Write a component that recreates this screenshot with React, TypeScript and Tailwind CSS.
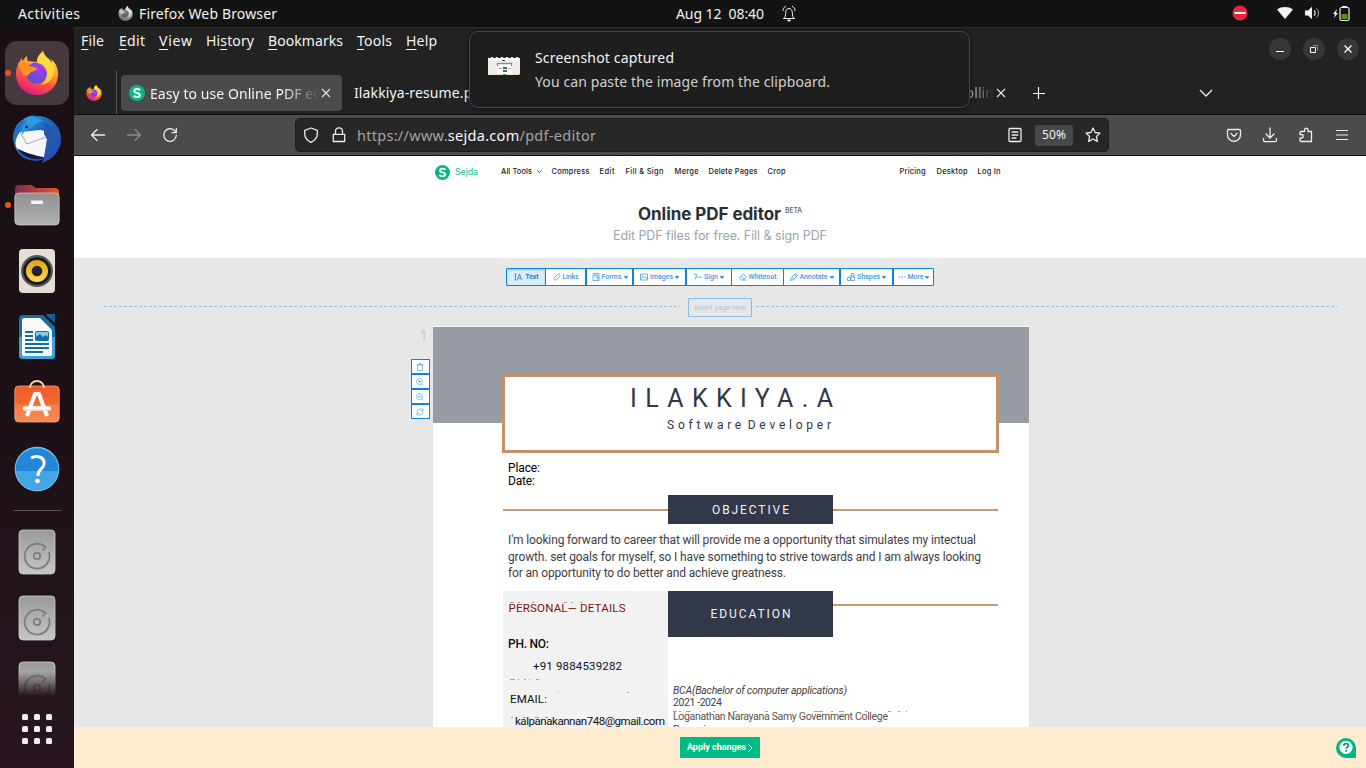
import { useLayoutEffect, useRef } from "react";
import type { ReactNode } from "react";

/** Single line of text whose letter spacing is computed so that it spans `w` pixels. */
function Fit({ w, className = "", children }: { w: number; className?: string; children: ReactNode }) {
  const ref = useRef<HTMLSpanElement>(null);
  useLayoutEffect(() => {
    const el = ref.current;
    if (!el) return;
    el.style.letterSpacing = "0px";
    const natural = el.getBoundingClientRect().width;
    const n = (el.textContent ?? "").length;
    if (n > 1) {
      const gap = (w - natural) / (n - 1);
      el.style.letterSpacing = `${gap}px`;
      el.style.marginRight = `${-gap}px`;
    }
  }, [w, children]);
  return (
    <span ref={ref} className={`inline-block shrink-0 whitespace-pre ${className}`}>
      {children}
    </span>
  );
}

function FirefoxIcon({ size, gray = false }: { size: number; gray?: boolean }) {
  const id = gray ? "g" : "c" + size;
  return (
    <svg width={size} height={size} viewBox="0 0 44 44" className="shrink-0">
      <defs>
        <linearGradient id={`fa${id}`} x1="0.8" y1="0" x2="0.35" y2="1">
          <stop offset="0" stopColor={gray ? "#f2f2f2" : "#fff44f"} />
          <stop offset="0.35" stopColor={gray ? "#bdbdbd" : "#ffb02e"} />
          <stop offset="0.65" stopColor={gray ? "#8d8d8d" : "#ff5a36"} />
          <stop offset="1" stopColor={gray ? "#6d6d6d" : "#e31587"} />
        </linearGradient>
        <radialGradient id={`fb${id}`} cx="0.65" cy="0.3" r="0.8">
          <stop offset="0" stopColor={gray ? "#7a7a7a" : "#a63cf0"} />
          <stop offset="1" stopColor={gray ? "#555" : "#5050d0"} />
        </radialGradient>
      </defs>
      <path d="M28 0c-3 3-6 6-6 11l-9-1c-1-2-1-3-1-5-2 1-3 3-4 5-1-1-1-2-1-3-3 4-6 9-6 16 0 12 9 21 21 21s21-9 21-21c0-7-3-12-7-15 1 2 1 3 1 4-2-5-8-6-9-12z" fill={`url(#fa${id})`} />
      <circle cx="21.500" cy="22" r="10.500" fill={`url(#fb${id})`} />
      <path d="M3 12c5-3 8 0 11 3 4 1 8 1 8 3-3 3-6 2-8 5-1 3-5 2-6 0-2-3-4-7-5-11z" fill={gray ? "#c4c4c4" : "#ff9125"} />
      <path d="M28 0c-3 3-7 7-6 12 5 1 10 5 10 11 0 5-3 9-7 11 9-1 14-7 14-14 0-6-3-8-6-11-2-3-4-5-5-9z" fill={gray ? "#dcdcdc" : "#ffdc3c"} opacity="0.85" />
    </svg>
  );
}

function Thunderbird() {
  return (
    <svg width="50" height="50" viewBox="0 0 50 50">
      <defs>
        <linearGradient id="tb" x1="0" y1="0" x2="1" y2="1">
          <stop offset="0" stopColor="#2b9be6" />
          <stop offset="0.5" stopColor="#1f62b8" />
          <stop offset="1" stopColor="#3444a8" />
        </linearGradient>
      </defs>
      <path d="M14 4c3-3 7-3 10-2 13-1 25 9 25 23 0 12-8 20-19 24l2-4c-10 4-22 1-27-8C-1 27 0 13 10 6z" fill="url(#tb)" />
      <path d="M5 31C-1 20 4 9 13 6c-5 7-6 9-5 14z" fill="#1d6fc4" />
      <path d="M8 18l20-2c6 0 7 4 7 9l-3 18c-8-1-20-4-27-8-3-6-1-12 3-17z" fill="#f7f7f9" />
      <path d="M8 18l7 12 19-7" fill="none" stroke="#a7a9b3" strokeWidth="1" />
      <path d="M11 5c8-5 17-1 20 2-5 1-10 6-13 7-3 2-5 2-8 7 0-6 1-10 5-14z" fill="#2f97dc" />
      <path d="M32 8c9 4 12 13 8 21l6-3-4 6 5-1-6 7 3 0-9 7c3-10 2-18-3-25z" fill="#2558ad" />
      <circle cx="14.500" cy="13" r="1.300" fill="#16233c" />
      <path d="M5 34c5 4 18 7 27 10-8 3-20 1-27-10z" fill="#1c1540" />
    </svg>
  );
}

function Folder() {
  return (
    <svg width="46" height="42" viewBox="0 0 46 42">
      <defs>
        <linearGradient id="fo1"><stop offset="0" stopColor="#7c2b50" /><stop offset="0.5" stopColor="#b8403c" /><stop offset="1" stopColor="#e95420" /></linearGradient>
        <linearGradient id="fo2" x2="0" y2="1"><stop offset="0" stopColor="#909090" /><stop offset="1" stopColor="#b2b2b2" /></linearGradient>
      </defs>
      <path d="M1 5a4 4 0 0 1 4-4h12c2 0 3 3 5 3h19a4 4 0 0 1 4 4v16H1z" fill="url(#fo1)" />
      <rect x="0.800" y="9" width="44.400" height="32" rx="4" fill="url(#fo2)" stroke="#d0d0d0" strokeWidth="0.700" />
      <rect x="17" y="16.500" width="12" height="3.500" rx="1" fill="#f4f4f4" />
    </svg>
  );
}

function Rhythmbox() {
  return (
    <svg width="38" height="46" viewBox="0 0 38 46">
      <defs><linearGradient id="rb" x2="0" y2="1"><stop offset="0" stopColor="#e0a411" /><stop offset="1" stopColor="#ffd94c" /></linearGradient></defs>
      <rect x="1" y="1" width="36" height="44" rx="4" fill="#e3ded2" />
      <circle cx="19" cy="23" r="16" fill="#55555c" />
      <circle cx="19" cy="23" r="13.800" fill="#191920" />
      <circle cx="19" cy="23" r="11" fill="url(#rb)" />
      <circle cx="19" cy="23" r="5.300" fill="#222226" />
    </svg>
  );
}

function Writer() {
  return (
    <svg width="38" height="46" viewBox="0 0 38 46">
      <rect x="1" y="1" width="36" height="44" rx="4" fill="#1272a8" />
      <path d="M1 23h36v18a4 4 0 0 1-4 4H5a4 4 0 0 1-4-4z" fill="#43a0d4" />
      <path d="M25 1l12 12V9L28 1z" fill="#1a1016" />
      <path d="M28 0h9v9z" fill="#0f5f90" />
      <path d="M6 4h16l12 12v24a2 2 0 0 1-2 2H6a2 2 0 0 1-2-2V6a2 2 0 0 1 2-2z" fill="#fafafa" />
      <path d="M7 18h8M7 22h8M7 26h8M7 30h24M7 34h24M7 38h18" stroke="#0f6fae" strokeWidth="2" />
      <rect x="17.500" y="17.500" width="13" height="9" rx="1" fill="#8cc8ee" stroke="#0f6fae" />
      <path d="M18 26v-3l4-3 3 3 3-2 2 2v3z" fill="#0f6fae" />
    </svg>
  );
}

function Software() {
  return (
    <svg width="46" height="44" viewBox="0 0 46 44">
      <defs><linearGradient id="sw" x2="0" y2="1"><stop offset="0" stopColor="#f1592a" /><stop offset="0.5" stopColor="#f2692f" /><stop offset="0.52" stopColor="#f47c46" /><stop offset="1" stopColor="#f58a55" /></linearGradient></defs>
      <rect x="0.800" y="7" width="44.400" height="36" rx="4" fill="url(#sw)" stroke="#f9a27d" strokeWidth="0.800" />
      <path d="M16 9c0-4 3-7 7-7s7 3 7 7" fill="none" stroke="#f3d7a8" strokeWidth="1.800" />
      <path d="M13 37l8-22h4l8 22" fill="none" stroke="#fff" strokeWidth="4" strokeLinejoin="round" />
      <path d="M11 29.500h24" stroke="#fff" strokeWidth="4.500" strokeLinecap="round" />
      <path d="M10 31h26" stroke="#f9b99c" strokeWidth="0.800" />
    </svg>
  );
}

function HelpApp() {
  return (
    <svg width="46" height="46" viewBox="0 0 46 46">
      <circle cx="23" cy="23" r="22.200" fill="#42a5e6" />
      <path d="M.8 25a22.200 22.200 0 1 1 44.400 0z" fill="#2386d6" />
      <circle cx="23" cy="23" r="21.800" fill="none" stroke="#8ccaf2" strokeWidth="0.800" />
      <path d="M17 12c6-3 14-1 13 6 0 5-6 5-6 11v1" fill="none" stroke="#fff" strokeWidth="3" />
      <circle cx="23.500" cy="35" r="2.300" fill="#fff" />
    </svg>
  );
}

function Disk() {
  return (
    <svg width="38" height="46" viewBox="0 0 38 46" className="shrink-0">
      <defs><linearGradient id="dk" x2="0" y2="1"><stop offset="0" stopColor="#9a9a9a" /><stop offset="1" stopColor="#c6c6c6" /></linearGradient></defs>
      <rect x="1" y="1" width="36" height="44" rx="4" fill="url(#dk)" stroke="#cfcfcf" strokeWidth="0.800" />
      <path d="M30.800 23A12.400 12.400 0 1 1 27.500 18L24.500 21.500" fill="none" stroke="#7d7d7d" strokeWidth="1.800" />
      <circle cx="19" cy="27" r="3.200" fill="none" stroke="#7d7d7d" strokeWidth="1.800" />
    </svg>
  );
}

function SejdaLogo({ size }: { size: number }) {
  return (
    <svg width={size} height={size} viewBox="0 0 16 16" className="shrink-0">
      <circle cx="8" cy="8" r="8" fill="#05b886" />
      <path d="M11.200 5.200C9.800 3.300 5.300 3.500 5.300 5.900c0 2.600 5.600 1.500 5.600 4.200 0 2.500-4.700 2.600-6.300.5" fill="none" stroke="#fff" strokeWidth="2" />
    </svg>
  );
}

function CloseX() {
  return (
    <svg width="10" height="10" viewBox="0 0 10 10" className="shrink-0" stroke="#e6e6e6" strokeWidth="1.100">
      <path d="M1 1l8 8M9 1L1 9" />
    </svg>
  );
}

function TopBar() {
  return (
    <header className="flex h-[27px] shrink-0 items-center bg-[#131313] pb-[1px] text-[14px] text-[#f2f2f2]">
      <div className="flex w-[676px] items-center pl-[18px]">
        <Fit w={62}>Activities</Fit>
        <div className="ml-[38px] mr-[6px] flex"><FirefoxIcon size={15} gray /></div>
        <Fit w={138}>Firefox Web Browser</Fit>
      </div>
      <Fit w={88}>Aug 12  08:40</Fit>
      <svg width="14" height="17" viewBox="0 0 14 17" className="ml-[18px]" fill="none" stroke="#eee">
        <path d="M1 13.500h12M2.500 13c1.200-2 1-4 1.300-6C4.200 4.500 5.300 3.500 7 3.500s2.800 1 3.200 3.500c.3 2 .1 4 1.300 6M1 6c0-2 1-4 3-5M13 6c0-2-1-4-3-5" />
        <path d="M5.500 15h3l-1.500 1.500z" fill="#eee" />
      </svg>
      <div className="ml-auto flex items-center pr-[16px]">
        <svg width="16" height="16" viewBox="0 0 16 16"><circle cx="8" cy="8" r="7.500" fill="#e6283c" /><path d="M2.500 8h11" stroke="#fff" strokeWidth="2" /></svg>
        <svg width="16" height="14" viewBox="0 0 16 14" className="ml-[29px]"><path d="M0 3.500C4 .2 12 .2 16 3.500L8 13z" fill="#f2f2f2" /></svg>
        <svg width="16" height="14" viewBox="0 0 16 14" className="ml-[12px]" fill="none" stroke="#bbb">
          <path d="M0 4.500h3L7 .8v12.400L3 9.500H0z" fill="#f2f2f2" stroke="none" />
          <path d="M9 4.500c1.300 1.300 1.300 3.700 0 5" stroke="#f2f2f2" strokeWidth="1.300" /><path d="M11.500 2.500c2.600 2.300 2.600 6.700 0 9" />
        </svg>
        <svg width="17" height="17" viewBox="0 0 17 17" className="ml-[12px]">
          <path d="M4 4L0 9h2l-1 4 4-5H3z" fill="#f2f2f2" />
          <rect x="7" y="2.500" width="9" height="13" rx="1.500" fill="none" stroke="#e8e8e8" strokeWidth="1.200" /><path d="M9 1.500h5" stroke="#e8e8e8" />
          <rect x="8.500" y="9" width="6" height="5" fill="#4e9a06" />
        </svg>
      </div>
    </header>
  );
}

function DockItem({ h, dot = false, children }: { h: string; dot?: boolean; children: ReactNode }) {
  return (
    <div className={`relative flex w-full shrink-0 items-center justify-center ${h}`}>
      {children}
      {dot && <span className="absolute left-[5px] top-1/2 h-[6px] w-[6px] -translate-y-1/2 rounded-full bg-[#e95420]" />}
    </div>
  );
}

function Dock() {
  return (
    <nav className="flex w-[74px] shrink-0 flex-col items-center bg-linear-to-b from-[#190f15] via-[#1b1117] to-[#29151f] pt-[14px]">
      <DockItem h="h-[64px]" dot>
        <div className="flex h-[64px] w-[64px] items-center justify-center rounded-[12px] bg-[#45393f]">
          <FirefoxIcon size={44} />
        </div>
      </DockItem>
      <DockItem h="h-[67px]"><Thunderbird /></DockItem>
      <DockItem h="h-[66px]" dot><Folder /></DockItem>
      <DockItem h="h-[66px]"><Rhythmbox /></DockItem>
      <DockItem h="h-[66px]"><Writer /></DockItem>
      <DockItem h="h-[62px]"><Software /></DockItem>
      <DockItem h="h-[74px]"><HelpApp /></DockItem>
      <div className="mt-[4px] h-px w-[48px] shrink-0 bg-[#5b5156]" />
      <DockItem h="h-[82px]"><Disk /></DockItem>
      <DockItem h="h-[50px]"><Disk /></DockItem>
      <div className="relative mt-[18px] h-[35px] w-[38px] shrink-0 overflow-hidden">
        <Disk />
        <div className="absolute inset-0 bg-linear-to-b from-transparent from-30% to-[#24131c]" />
      </div>
      <div className="mt-[18px] grid grid-cols-3 gap-[6px]">
        {[0, 1, 2, 3, 4, 5, 6, 7, 8].map((i) => (
          <span key={i} className="h-[6px] w-[6px] rounded-[1.500px] bg-[#f2f0ee]" />
        ))}
      </div>
    </nav>
  );
}

const menus: [string, string, string, number, string][] = [
  ["", "F", "ile", 23, "mr-[15px]"],
  ["", "E", "dit", 26, "mr-[14px]"],
  ["", "V", "iew", 33, "mr-[14px]"],
  ["Hi", "s", "tory", 48, "mr-[14px]"],
  ["", "B", "ookmarks", 75, "mr-[14px]"],
  ["", "T", "ools", 35, "mr-[14px]"],
  ["", "H", "elp", 31, ""],
];

function MenuBar() {
  return (
    <div className="flex h-[44px] items-start justify-between border-t border-[#303030]">
      <div className="flex pl-[7px] pt-[3px] text-[14px] leading-[20px] text-[#f4f4f4]">
        {menus.map(([a, b, c, w, gap]) => (
          <div key={b + c} className={gap}>
            <Fit w={w}>{a}<span className="underline decoration-1 underline-offset-[3px]">{b}</span>{c}</Fit>
          </div>
        ))}
      </div>
      <div className="flex gap-[12px] pr-[7px] pt-[10px]">
        <WinButton><path d="M7 13.500h8" /></WinButton>
        <WinButton><path d="M7.500 9.500h5v5h-5z" /><path d="M10 7.500h4.500v5" stroke="#888" /></WinButton>
        <WinButton><path d="M7.500 7.500l7 7M14.500 7.500l-7 7" strokeWidth="1.300" /></WinButton>
      </div>
    </div>
  );
}

function WinButton({ children }: { children: ReactNode }) {
  return (
    <svg width="22" height="22" viewBox="0 0 22 22" fill="none" stroke="#fff">
      <circle cx="11" cy="11" r="11" fill="#373737" stroke="none" />
      {children}
    </svg>
  );
}

function TabStrip() {
  return (
    <div className="flex h-[44px] shrink-0 items-stretch border-b border-[#0f0f0f] text-[14px] text-[#f4f4f4]">
      <div className="flex w-[43px] items-center justify-center border-r border-[#5a5a5a] pl-[0px]">
        <div className="-ml-[2px]"><FirefoxIcon size={16} /></div>
      </div>
      <div className="ml-[4px] mt-[4px] flex h-[36px] w-[221px] items-center rounded-[4px] bg-[#4b4b4b] pl-[8px]">
        <SejdaLogo size={16} />
        <div className="ml-[5px] w-[170px] overflow-hidden whitespace-nowrap [mask-image:linear-gradient(to_right,#000_78%,transparent)]">
          <Fit w={195}>Easy to use Online PDF editor</Fit>
        </div>
        <div className="ml-[1px]"><CloseX /></div>
      </div>
      <div className="ml-[12px] flex w-[642px] items-center">
        <Fit w={132}>Ilakkiya-resume.pdf</Fit>
        <div className="ml-auto mr-[2px] w-[34px] overflow-hidden text-right [mask-image:linear-gradient(to_right,#000_10%,transparent)]">
          <Fit w={34}>rollin</Fit>
        </div>
      </div>
      <div className="flex items-center">
        <CloseX />
        <svg width="12" height="12" viewBox="0 0 12 12" className="ml-[27px]" stroke="#fff"><path d="M5.500 0v12M0 6.500h12" strokeWidth="1.200" /></svg>
        <svg width="14" height="8" viewBox="0 0 14 8" className="ml-[154px]" fill="none" stroke="#eee" strokeWidth="1.300"><path d="M1 1l6 6 6-6" /></svg>
      </div>
    </div>
  );
}

function Ic({ children, className = "", color = "#ececec" }: { children: ReactNode; className?: string; color?: string }) {
  return (
    <svg width="16" height="16" viewBox="0 0 16 16" className={`shrink-0 ${className}`} fill="none" stroke={color} strokeWidth="1.300" strokeLinecap="round" strokeLinejoin="round">
      {children}
    </svg>
  );
}

function NavBar() {
  return (
    <div className="flex h-[41px] shrink-0 items-center border-b border-[#111] bg-[#4b4b4b] pl-[16px]">
      <Ic><path d="M14.500 8H1.800M7 2.500L1.500 8 7 13.500" /></Ic>
      <Ic className="ml-[20px]" color="#8b8b8b"><path d="M1.500 8h12.700M9 2.500L14.500 8 9 13.500" /></Ic>
      <Ic className="ml-[20px]"><path d="M14.300 8.500A6.300 6.300 0 1 1 12.500 3.600L14 5.300M14.300 1.500v4.200h-4.200" /></Ic>
      <div className="ml-[117px] flex h-[34px] w-[814px] shrink-0 items-center rounded-[5px] border border-[#1c1c1c] bg-[#272727] pl-[7px]">
        <Ic><path d="M8 1l6.300 2.300V7c0 4-2.600 6.500-6.300 8.300C4.300 13.500 1.700 11 1.700 7V3.300z" /></Ic>
        <Ic className="ml-[12px]"><path d="M2.300 7.300h11.400v7.200H2.300zM4.500 7V4.300a3.500 3.500 0 0 1 7 0V7" /></Ic>
        <div className="ml-[10px] pt-[1px] text-[14.500px] text-[#a3a3a3]">
          <Fit w={239}>https://www.<span className="text-[#fafafa]">sejda.com</span>/pdf-editor</Fit>
        </div>
        <Ic className="ml-auto"><rect x="2" y="1.500" width="12" height="13" rx="1" /><path d="M5 5h6M5 8h6M5 11h4" /></Ic>
        <div className="ml-[12px] flex h-[21px] w-[38px] items-center justify-center rounded-[3px] bg-[#484848] text-[12px] text-[#f2f2f2]"><Fit w={24}>50%</Fit></div>
        <Ic className="ml-[12px] mr-[7px]"><path d="M8 1l2.100 4.500 4.900.6-3.600 3.400 1 4.900L8 12l-4.400 2.400 1-4.900L1 6.100l4.900-.6z" /></Ic>
      </div>
      <Ic className="ml-[117px]"><path d="M2.500 2.500h11a1 1 0 0 1 1 1V7.500c0 9-13 9-13 0V3.500a1 1 0 0 1 1-1zM5 6.500l3 3 3-3" /></Ic>
      <Ic className="ml-[20px]"><path d="M8 1v9.500M4 7l4 4 4-4M1.500 11.500v1.500a1.700 1.700 0 0 0 1.700 1.700h9.600a1.700 1.700 0 0 0 1.700-1.700v-1.500" /></Ic>
      <Ic className="ml-[20px]"><path d="M2 6.500V5.500a1 1 0 0 1 1-1h3.500V3a1.700 1.700 0 0 1 3.500 0v1.500h3.500v10H3a1 1 0 0 1-1-1v-2.500h1.500a1.700 1.700 0 0 0 0-3.500H2z" /></Ic>
      <Ic className="ml-[20px]"><path d="M2 3.500h12M2 8h12M2 12.500h12" strokeLinecap="butt" strokeWidth="1.100" /></Ic>
    </div>
  );
}

const nav: [string, number, string][] = [
  ["Compress", 38, "ml-[9px]"],
  ["Edit", 15, "ml-[10px]"],
  ["Fill & Sign", 38, "ml-[11px]"],
  ["Merge", 24, "ml-[11px]"],
  ["Delete Pages", 49, "ml-[10px]"],
  ["Crop", 18, "ml-[10px]"],
  ["Pricing", 26, "ml-[114px]"],
  ["Desktop", 31, "ml-[11px]"],
  ["Log In", 23, "ml-[10px]"],
];

function SiteHeader() {
  return (
    <div className="h-[102px] shrink-0 bg-white font-[Inter,sans-serif]">
      <div className="flex h-[32px] items-center pl-[361px] text-[7.500px] font-medium text-[#222]">
        <SejdaLogo size={15} />
        <Fit w={23} className="ml-[5px] text-[9px] font-normal text-[#14bd8d]">Sejda</Fit>
        <Fit w={31} className="ml-[23px]">All Tools</Fit>
        <svg width="5" height="4" viewBox="0 0 5 4" className="ml-[5px] mr-[0.500px]" fill="none" stroke="#444"><path d="M.5.5l2 2 2-2" /></svg>
        {nav.map(([t, w, m]) => <Fit key={t} w={w} className={m}>{t}</Fit>)}
      </div>
      <div className="mt-[15px] flex h-[24px] items-center pl-[564px]">
        <Fit w={143} className="text-[17px] font-bold text-[#2b2f33]">Online PDF editor</Fit>
        <Fit w={17} className="-mt-[8px] ml-[4px] text-[7px] text-[#333]">BETA</Fit>
      </div>
      <div className="flex h-[18px] items-center pl-[539px] pt-[1px]">
        <Fit w={214} className="text-[12.500px] text-[#9aa4ab]">Edit PDF files for free. Fill &amp; sign PDF</Fit>
      </div>
    </div>
  );
}

function Tiny({ children }: { children: ReactNode }) {
  return <svg width="8" height="8" viewBox="0 0 16 16" className="shrink-0" fill="none" stroke="currentColor" strokeWidth="1.500">{children}</svg>;
}

const tools: { t: string; w: number; box: string; caret: boolean; icon: ReactNode }[] = [
  { t: "Links", w: 16, box: "w-[40px] border-l", caret: false, icon: <path d="M7 9L9 7M6 6L2 10a3 3 0 0 0 4 4l4-4M10 10l4-4a3 3 0 0 0-4-4L6 6" /> },
  { t: "Forms", w: 20, box: "w-[47px] border-l-2", caret: true, icon: <path d="M2 1h12v14H2zM4 4h8M4 6h8M9 9h5M9 12h5" /> },
  { t: "Images", w: 23, box: "w-[53px] border-l-2", caret: true, icon: <path d="M1 2h14v12H1zM2 12l4-5 3 3 3-2 3 4M4 5h2" /> },
  { t: "Sign", w: 14, box: "w-[46px] border-l-2", caret: true, icon: <path d="M0 3h6L2 13M5 9c3-4 3 3 5 0s3 0 6-1" /> },
  { t: "Whiteout", w: 28, box: "w-[52px] border-l", caret: false, icon: <path d="M1 9l8-7 6 6-7 6H5zM5 6l6 6M8 14h7" /> },
  { t: "Annotate", w: 28, box: "w-[56px] border-l", caret: true, icon: <path d="M1 15l2-6 8-8 4 3-7 9zM9 3l4 4M4 9l4 3" /> },
  { t: "Shapes", w: 23, box: "w-[53px] border-l-2", caret: true, icon: <path d="M9 1h5v5H9zM1 9h6v6H1zM8 8h7v7H8zM3 9l4-5" /> },
  { t: "More", w: 16, box: "w-[41px] border-l-2", caret: true, icon: <path d="M0 8h4M6 8h4M12 8h3" /> },
];

function EditorToolbar() {
  return (
    <div className="ml-[432px] flex h-[18px] w-[428px] rounded-[1px] border border-[#0a83e6] bg-white font-[Roboto,sans-serif] text-[7px] font-medium text-[#3b9ae5]">
      <div className="flex w-[38px] shrink-0 items-center justify-center gap-[4px] bg-[#d7edf9] text-[#2a6d9c] shadow-[inset_0_1px_2px_#9ac4df]">
        <Tiny><path d="M1 2h4M3 2v12M1 14h4M7 14l4-12 4 12M9 10h5" /></Tiny>
        <Fit w={13} className="pt-[1px]">Text</Fit>
      </div>
      {tools.map(({ t, w, box, caret, icon }) => (
        <div key={t} className={`flex shrink-0 items-center justify-center gap-[2px] border-[#0a83e6] ${box}`}>
          <Tiny>{icon}</Tiny>
          <Fit w={w} className="pt-[1px]">{t}</Fit>
          {caret && <svg width="4" height="3" viewBox="0 0 4 3"><path d="M0 .5h4L2 2.500z" fill="#167fd0" stroke="#167fd0" strokeWidth="0.500" /></svg>}
        </div>
      ))}
    </div>
  );
}

function InsertRow() {
  return (
    <div className="mt-[12px] flex h-[19px] items-start pl-[30px]">
      <svg width="576" height="18" shapeRendering="crispEdges"><path d="M0 8.500h576" stroke="#8ec1ec" strokeDasharray="3 2" /></svg>
      <div className="ml-[8px] flex h-[19px] w-[64px] items-center justify-center rounded-[1px] border border-[#86bfef] text-[7px] text-[#a0c8ec]">
        <Fit w={51} className="pt-[1px]">Insert page here</Fit>
      </div>
      <svg width="581" height="18" className="ml-[4px]" shapeRendering="crispEdges"><path d="M0 8.500h581" stroke="#8ec1ec" strokeDasharray="3 2" /></svg>
    </div>
  );
}

const sideIcons: ReactNode[] = [
  <path d="M3 4h10v11H3zM1 3h14M6 1h4" />,
  <path d="M11 11l4 4M4 7h6M7 4v6M1 7a6 6 0 1 0 12 0 6 6 0 0 0-12 0z" />,
  <path d="M11 11l4 4M4 7h6M1 7a6 6 0 1 0 12 0 6 6 0 0 0-12 0z" />,
  <path d="M2 8c0-7 10-8 12-3M14 1v5H9M14 8c0 7-10 8-12 3M2 15v-5h5" />,
];

/** Slivers of the original text that stay visible around edited lines. */
function Slivers({ w, d, className }: { w: number; d: string; className: string }) {
  return (
    <svg width={w} height="2" className={`absolute ${className}`} fill="none" stroke="#8d8d8d" opacity="0.8">
      <path d={d} />
    </svg>
  );
}

function ResumePage() {
  return (
    <article className="h-[402px] w-[596px] overflow-hidden border-t border-[#f8f8f8] bg-white font-[Roboto,sans-serif] text-[12px] text-[#3f4044]">
      <div className="h-[96px] bg-[#989ca4] pl-[69px] pt-[47px]">
        <div className="h-[79px] w-[497px] border-[3px] border-[#c39367] bg-white text-[#303747]">
          <div className="flex h-[40px] items-center pl-[125px] pt-[3px] text-[25px]"><Fit w={203}>ILAKKIYA.A</Fit></div>
          <div className="flex h-[16px] items-center pl-[162px] text-[12px]"><Fit w={164} className="[word-spacing:-4px]">Software Developer</Fit></div>
        </div>
      </div>
      <div className="mt-[38px] pl-[75px] leading-[14px] text-black">
        <div><Fit w={32}>Place:</Fit></div>
        <div className="-mt-px"><Fit w={27}>Date:</Fit></div>
      </div>
      <div className="mt-[7px] flex h-[29px] items-center pl-[70px]">
        <div className="h-[2px] w-[165px] bg-[#c39a74]" />
        <div className="flex h-[29px] w-[165px] items-center justify-center bg-[#313848] text-[#f2f3f5]"><Fit w={77}>OBJECTIVE</Fit></div>
        <div className="h-[2px] w-[165px] bg-[#c39a74]" />
      </div>
      <div className="mt-[8px] flex h-[50px] flex-col items-start pl-[75px] leading-[16.500px]">
        <Fit w={468}>I'm looking forward to career that will provide me a opportunity that simulates my intectual</Fit>
        <Fit w={473}>growth. set goals for myself, so I have something to strive towards and I am always looking</Fit>
        <Fit w={278}>for an opportunity to do better and achieve greatness.</Fit>
      </div>
      <div className="relative mt-[9px] flex pl-[70px]">
        <div className="h-[200px] w-[165px] bg-[#f2f2f2] pl-[5px] text-[11.500px] leading-[16px] text-[#111]">
          <div className="mt-[9px] pl-[0.500px] text-[#85100f]"><Fit w={117}>PERSONAL— DETAILS</Fit></div>
          <div className="mt-[20px] text-[12px] font-medium"><Fit w={41}>PH. NO:</Fit></div>
          <div className="mt-[6px] pl-[25px]"><Fit w={89}>+91 9884539282</Fit></div>
          <div className="mt-[17px] pl-[2px]"><Fit w={37}>EMAIL:</Fit></div>
          <div className="mt-[6px] pl-[7px]"><Fit w={150}>kalpanakannan748@gmail.com</Fit></div>
          <div className="mt-[18px] pl-[6px]"><Fit w={47}>ADDRESS:</Fit></div>
        </div>
        <div className="w-[330px] text-[10.500px] leading-[13px]">
          <div className="flex">
            <div className="flex h-[46px] w-[165px] items-center justify-center bg-[#313848] text-[12px] text-[#f2f3f5]"><Fit w={80}>EDUCATION</Fit></div>
            <div className="mt-[13px] h-[2px] w-[165px] bg-[#c39a74]" />
          </div>
          <div className="flex flex-col items-start pl-[5px] pt-[47px]">
            <Fit w={174} className="italic">BCA(Bachelor of computer applications)</Fit>
            <Fit w={49} className="-mt-[1px]">2021 -2024</Fit>
            <Fit w={215} className="mt-[1px] text-[#5c5148]">Loganathan Narayana Samy Government College</Fit>
            <Fit w={33}>Ponneri</Fit>
            <Fit w={95} className="mt-[23px]">HSC (percentage-74)</Fit>
          </div>
        </div>
        <Slivers w={90} className="left-[77px] top-[11px]" d="M0 .5h4M8 .5h2M22 .5h2M54 .5h3M61 .5h2M70 .5h2" />
        <Slivers w={32} className="left-[77px] top-[88px]" d="M0 .5h5M8 .5h1M14 .5h2M19 .5h1M26 .5h3" />
        <Slivers w={75} className="left-[125px] top-[101px]" d="M0 .5h1M69 .5h2" />
        <Slivers w={40} className="left-[78px] top-[126px]" d="M0 .5h2M12 .5h3M24 .5h4M34 .5h3" />
        <Slivers w={240} className="left-[240px] top-[120px]" d="M0 .5h4M6 .5h2M13 .5h5M27 .5h1M40 .5h2M60 .5h4M92 .5h3M141 .5h9M158 .5h2M166 .5h5M192 .5h3M215 .5h3M225 .5h2M233 .5h1" />
      </div>
    </article>
  );
}

function Workspace() {
  return (
    <main className="relative h-[510px] overflow-hidden bg-[#e7e7e7] pt-[10px] font-[Roboto,sans-serif]">
      <EditorToolbar />
      <InsertRow />
      <div className="mt-[9px] flex">
        <div className="w-[359px] pl-[337px] pt-[1px]">
          <div className="flex h-[18px] items-center justify-end pr-[5px] text-[15px] text-[#c9cacc]">1</div>
          <div className="mt-[14px] flex w-[19px] flex-col text-[#58abee]">
            {sideIcons.map((icon, i) => (
              <div key={i} className="flex h-[15px] items-center border border-[#0a83e6] bg-white pl-[4px]"><Tiny>{icon}</Tiny></div>
            ))}
          </div>
        </div>
        <ResumePage />
      </div>
      <div className="absolute inset-x-0 bottom-0 flex h-[41px] items-center bg-[#ffebcf]/97">
        <button className="ml-[606px] flex h-[21px] w-[80px] items-center justify-center gap-[2px] rounded-[1px] bg-[#00bb85] text-[9px] font-bold text-white">
          <Fit w={59}>Apply changes</Fit>
          <svg width="5" height="8" viewBox="0 0 5 8" fill="none" stroke="#fff"><path d="M.5.5L4 4 .5 7.500" /></svg>
        </button>
        <svg width="20" height="20" viewBox="0 0 20 20" className="ml-auto mr-[10px]">
          <path d="M10 0a10 10 0 0 1 10 10v8.500a1.500 1.500 0 0 1-1.500 1.500H10A10 10 0 0 1 10 0z" fill="#00b783" />
          <circle cx="10" cy="9.300" r="6.600" fill="#fff" />
          <path d="M7.800 7.800c0-3 4.600-2.800 4.600-.3 0 1.700-2.200 1.500-2.200 3.300M10.200 12v1.700" fill="none" stroke="#00a577" strokeWidth="1.800" />
        </svg>
      </div>
    </main>
  );
}

function Thumb() {
  return (
    <svg width="32" height="18" viewBox="0 0 32 18" className="shrink-0">
      <path d="M0 0h32v18H0z" fill="#ececec" />
      <path d="M0 .5h32" stroke="#333" strokeDasharray="3 2" />
      <path d="M1 2.500h30" stroke="#fff" strokeWidth="2" />
      <path d="M14 3.500h3" stroke="#303848" />
      <path d="M9 6h15v12H9z" fill="#fff" />
      <path d="M9.500 9V6.500h14V9" fill="none" stroke="#888e98" strokeWidth="1.300" />
      <path d="M15 11h4M15 14h4" stroke="#222936" strokeWidth="1.300" />
      <path d="M11 11.500h3M20 11.500h3" stroke="#aaa" />
      <path d="M0 17.500h32" stroke="#ffe2ba" />
      <path d="M15 17.500h3M31 17.500h1" stroke="#00b783" />
    </svg>
  );
}

export default function App() {
  return (
    <div className="relative flex h-[768px] w-[1366px] flex-col overflow-hidden bg-[#222] font-['Noto_Sans',sans-serif]">
      <TopBar />
      <div className="flex min-h-0 flex-1">
        <Dock />
        <div className="flex w-[1292px] flex-col">
          <MenuBar />
          <TabStrip />
          <NavBar />
          <SiteHeader />
          <Workspace />
        </div>
      </div>
      <aside className="absolute left-[469px] top-[31px] flex h-[77px] w-[501px] items-center rounded-[9px] border border-[#464646] bg-[#1e1e1e] pl-[18px] text-[14px] text-[#f2f2f2] shadow-[0_0_5px_#111]">
        <div className="-mt-[7px]"><Thumb /></div>
        <div className="ml-[15px] flex flex-col items-start leading-[24px]">
          <Fit w={139}>Screenshot captured</Fit>
          <Fit w={295} className="text-[#d0d0d0]">You can paste the image from the clipboard.</Fit>
        </div>
      </aside>
    </div>
  );
}
